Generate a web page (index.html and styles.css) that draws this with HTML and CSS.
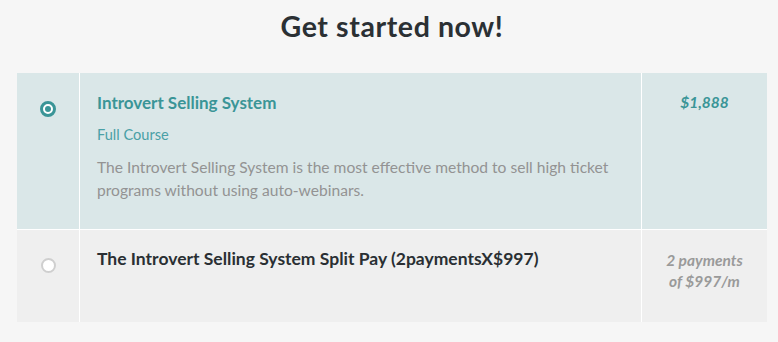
FILE: index.html
```html
<!DOCTYPE html>
<html lang="en">
<head>
<meta charset="utf-8">
<title>Get started now!</title>
<link rel="stylesheet" href="styles.css">
</head>
<body>
<main class="page">
  <h1 class="heading">Get started now!</h1>
  <div class="plans">
    <div class="plan plan--selected">
      <div class="cell cell--radio"><span class="radio radio--on"></span></div>
      <div class="cell cell--info">
        <div class="plan-title">Introvert Selling System</div>
        <div class="plan-sub">Full Course</div>
        <p class="plan-desc">The Introvert Selling System is the most effective method to sell high ticket programs without using auto-webinars.</p>
      </div>
      <div class="cell cell--price"><span class="price">$1,888</span></div>
    </div>
    <div class="plan">
      <div class="cell cell--radio"><span class="radio"></span></div>
      <div class="cell cell--info">
        <div class="plan-title plan-title--dark">The Introvert Selling System Split Pay (2paymentsX$997)</div>
      </div>
      <div class="cell cell--price"><span class="price price--muted">2 payments<br>of $997/m</span></div>
    </div>
  </div>
</main>
</body>
</html>
```
FILE: styles.css
```css
* { box-sizing: border-box; }
html, body { margin: 0; padding: 0; }
body {
  background: #f6f6f6;
  font-family: Lato, "Open Sans", sans-serif;
  color: #2c3033;
}
.page { padding: 0 11px 0 17px; }
.heading {
  margin: 0;
  padding-top: 9px;
  height: 73px;
  text-align: center;
  font-size: 28.5px;
  line-height: 34px;
  letter-spacing: 0.6px;
  font-weight: 700;
  color: #2b3034;
}
.plans {
  display: grid;
  gap: 1px;
  background: #ffffff;
  width: 750px;
}
.plan {
  display: grid;
  grid-template-columns: 62px 561px 125px;
  column-gap: 1px;
  background: #ffffff;
}
.cell { background: #efefef; }
.plan--selected .cell { background: #dae7e8; height: 156px; }
.plan:not(.plan--selected) .cell { height: 92px; }
.cell--radio {
  display: flex;
  justify-content: center;
  padding-top: 28px;
}
.radio {
  width: 15px;
  height: 15px;
  border-radius: 50%;
  border: 2px solid #cfcfcf;
  background: #ffffff;
}
.radio--on {
  width: 16px;
  height: 16px;
  border: 3px solid #3a9597;
  background: #ffffff;
  position: relative;
}
.radio--on::after {
  content: "";
  position: absolute;
  left: 2px; top: 2px;
  width: 6px; height: 6px;
  border-radius: 50%;
  background: #3a9597;
}
.cell--info { padding: 19px 16px 0 17px; }
.plan:not(.plan--selected) .cell--info { padding-top: 18px; }
.plan-title {
  font-size: 17px;
  line-height: 22px;
  font-weight: 700;
  color: #3a9597;
}
.plan-title--dark { color: #2a2f33; font-size: 17.5px; }
.plan-sub {
  margin-top: 12px;
  font-size: 14.6px;
  line-height: 18px;
  color: #4aa0a6;
}
.plan-desc {
  margin: 12px 0 0;
  font-size: 15.6px;
  line-height: 23px;
  color: #939393;
}
.cell--price {
  text-align: center;
  padding-top: 19px;
}
.plan:not(.plan--selected) .cell--price { padding-top: 20px; }
.price {
  font-size: 15.5px;
  line-height: 21px;
  font-weight: 700;
  font-style: italic;
  color: #3a9597;
}
.price--muted { color: #9a9a9a; }
```
